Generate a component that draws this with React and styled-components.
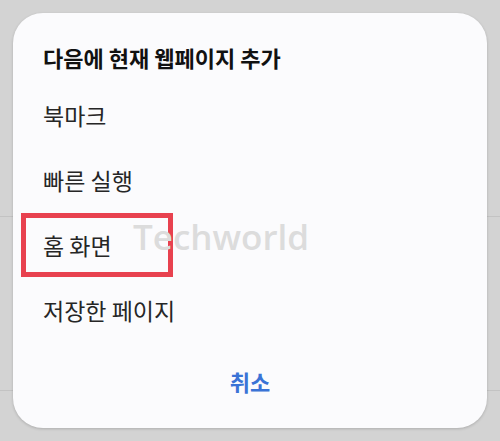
import React from "react";
import styled, { createGlobalStyle } from "styled-components";

const Global = createGlobalStyle`
  html, body {
    margin: 0;
    padding: 0;
  }
  body {
    width: 500px;
    height: 441px;
    overflow: hidden;
    background-color: #d3d3d3;
    background-image:
      linear-gradient(#c3c3c3, #c3c3c3),
      linear-gradient(#c3c3c3, #c3c3c3);
    background-size: 100% 1px, 100% 1px;
    background-position: 0 216px, 0 390px;
    background-repeat: no-repeat;
    font-family: "Noto Sans CJK KR", "Noto Sans", sans-serif;
  }
`;

const Screen = styled.div`
  width: 500px;
  height: 441px;
  box-sizing: border-box;
  padding: 13px 13px 0;
`;

const Dialog = styled.div`
  position: relative;
  width: 474px;
  height: 415px;
  box-sizing: border-box;
  padding: 30px 0 33px;
  background: #fbfbfd;
  border-radius: 30px;
  box-shadow: 0 1px 3px rgba(0, 0, 0, 0.18);
  display: flex;
  flex-direction: column;
`;

const Title = styled.h2`
  margin: 0 0 11px;
  padding-left: 30px;
  font-size: 22px;
  line-height: 28px;
  font-weight: 700;
  color: #111;
`;

const List = styled.div`
  display: flex;
  flex-direction: column;
`;

const Item = styled.div`
  position: relative;
  height: 65px;
  display: flex;
  align-items: center;
  padding-left: 30px;
  font-size: 23px;
  font-weight: 400;
  color: #262626;
`;

const Highlight = styled.span`
  position: absolute;
  left: 8px;
  top: 1px;
  width: 152px;
  height: 64px;
  box-sizing: border-box;
  border: 5px solid #e8414f;
  pointer-events: none;
`;

const Cancel = styled.button`
  margin-top: 25px;
  align-self: center;
  border: 0;
  background: none;
  padding: 0;
  font-family: inherit;
  font-size: 22px;
  line-height: 28px;
  font-weight: 700;
  color: #3a73d6;
`;

const Watermark = styled.div`
  position: absolute;
  left: 120px;
  top: 200px;
  font-family: "Open Sans", "Noto Sans", sans-serif;
  font-size: 35px;
  font-weight: 600;
  color: #dcdcdc;
  pointer-events: none;
`;

const items = ["북마크", "빠른 실행", "홈 화면", "저장한 페이지"];

export default function App() {
  return (
    <>
      <Global />
      <Screen>
        <Dialog>
          <Title>다음에 현재 웹페이지 추가</Title>
          <List>
            {items.map((t) => (
              <Item key={t}>
                {t === "홈 화면" && <Highlight />}
                {t}
              </Item>
            ))}
          </List>
          <Cancel>취소</Cancel>
          <Watermark>Techworld</Watermark>
        </Dialog>
      </Screen>
    </>
  );
}
